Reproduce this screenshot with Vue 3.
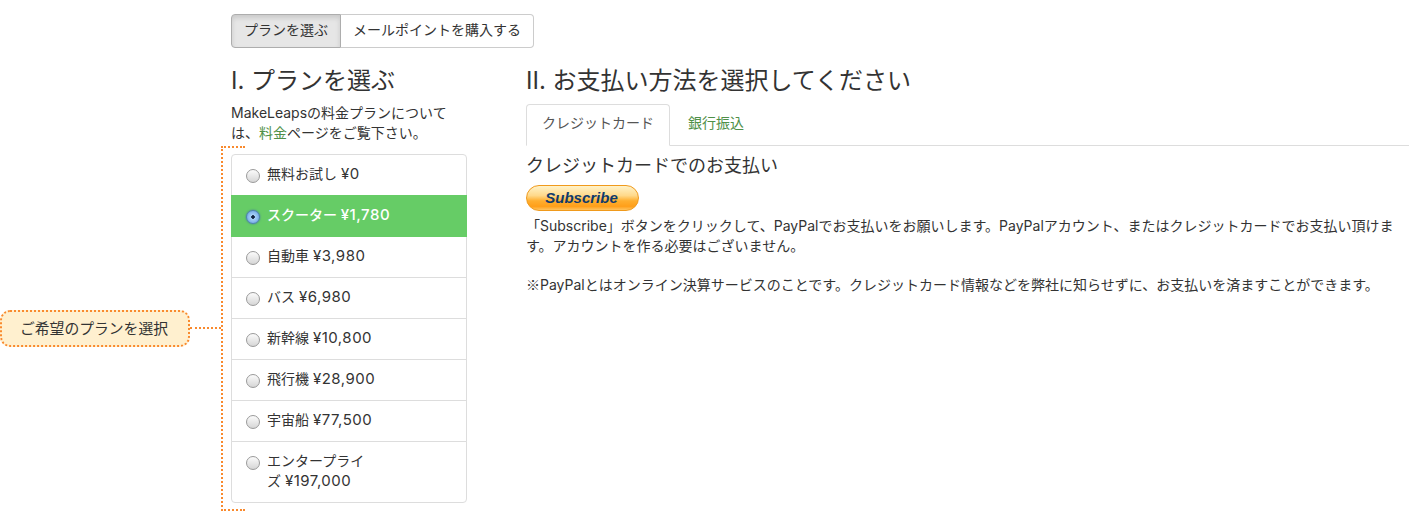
<script setup>
const plans = [
  { name: '無料お試し', price: '¥0' },
  { name: 'スクーター', price: '¥1,780', active: true },
  { name: '自動車', price: '¥3,980' },
  { name: 'バス', price: '¥6,980' },
  { name: '新幹線', price: '¥10,800' },
  { name: '飛行機', price: '¥28,900' },
  { name: '宇宙船', price: '¥77,500' },
  { name: 'エンタープライ\nズ', price: '¥197,000' }
]
</script>

<template>
  <div class="page">
    <div class="btn-group">
      <span class="btn active">プランを選ぶ</span>
      <span class="btn">メールポイントを購入する</span>
    </div>

    <div class="columns">
      <section class="plans">
        <h3>I. プランを選ぶ</h3>
        <p class="intro">MakeLeapsの料金プランについては、<a class="link">料金</a>ページをご覧下さい。</p>
        <div class="plan-list">
          <label
            v-for="plan in plans"
            :key="plan.name"
            class="plan"
            :class="{ selected: plan.active }"
          >
            <span class="radio"></span>
            <span class="plan-name">{{ plan.name }} <span class="price">{{ plan.price }}</span></span>
          </label>

          <!-- annotation overlay -->
          <div class="bracket"></div>
          <div class="connector"></div>
          <div class="callout">ご希望のプランを選択</div>
        </div>
      </section>

      <section class="payment">
        <h3>II. お支払い方法を選択してください</h3>
        <ul class="tabs">
          <li class="tab active">クレジットカード</li>
          <li class="tab"><a class="link">銀行振込</a></li>
        </ul>
        <h4>クレジットカードでのお支払い</h4>
        <div class="subscribe">Subscribe</div>
        <p class="note">「Subscribe」ボタンをクリックして、PayPalでお支払いをお願いします。PayPalアカウント、またはクレジットカードでお支払い頂けます。アカウントを作る必要はございません。</p>
        <p class="note"><span class="mark">※</span>PayPalとはオンライン決算サービスのことです。クレジットカード情報などを弊社に知らせずに、お支払いを済ますことができます。</p>
      </section>
    </div>
  </div>
</template>

<style scoped>
.page {
  box-sizing: border-box;
  width: 1409px;
  padding: 14px 0 16px 231px;
  font-family: Inter, "Noto Sans CJK JP", sans-serif;
  font-size: 14px;
  line-height: 20px;
  color: #333;
}

.btn-group {
  display: flex;
}

.btn {
  box-sizing: border-box;
  height: 34px;
  padding: 5px 12px;
  border: 1px solid #ccc;
  border-left-width: 0;
  border-radius: 0 4px 4px 0;
  background: #fff;
}

.btn.active {
  border-left-width: 1px;
  border-color: #adadad;
  border-radius: 4px 0 0 4px;
  background: #e6e6e6;
  box-shadow: inset 0 3px 5px rgba(0, 0, 0, 0.125);
}

.columns {
  display: flex;
  gap: 59px;
  margin-top: 20px;
}

h3 {
  margin: 0;
  font-size: 24px;
  font-weight: 400;
  line-height: 26px;
}

.plans {
  flex: 0 0 236px;
}

.intro {
  width: 225px;
  margin: 9px 0 11px;
}

.link {
  color: #4f9048;
}

.plan-list {
  position: relative;
  display: flex;
  flex-direction: column;
}

.plan {
  display: flex;
  align-items: flex-start;
  gap: 7px;
  margin-bottom: -1px;
  padding: 9px 15px 11px 14px;
  border: 1px solid #ddd;
  background: #fff;
}

.plan:first-child {
  border-radius: 4px 4px 0 0;
}

.plan:nth-child(8) {
  margin-bottom: 0;
  border-radius: 0 0 4px 4px;
}

.plan.selected {
  position: relative;
  border-color: #66cc66;
  background: #66cc66;
  color: #fff;
  font-weight: 500;
}

.plan-name {
  white-space: pre-line;
}

.price {
  font-size: 15px;
  letter-spacing: 0.5px;
}

.radio {
  box-sizing: border-box;
  flex: none;
  width: 14px;
  height: 14px;
  margin-top: 5px;
  border: 1px solid #9a9a9a;
  border-radius: 50%;
  background: linear-gradient(#fbfbfb, #d6d6d6);
}

.selected .radio {
  border-color: #4f7fb5;
  background: radial-gradient(circle, #10233f 0 1.5px, #a9d2f7 2px, #6fa8e3 7px);
  box-shadow: 0 0 2px #3d6ea8;
}

.bracket {
  position: absolute;
  top: -8px;
  bottom: -8px;
  left: -10px;
  width: 24px;
  border: 2px dotted #f98a2e;
  border-right: 0;
  box-sizing: border-box;
}

.connector {
  position: absolute;
  top: 173px;
  left: -41px;
  width: 31px;
  border-top: 2px dotted #f98a2e;
}

.callout {
  position: absolute;
  top: 156px;
  left: -231px;
  box-sizing: border-box;
  width: 190px;
  height: 37px;
  padding-right: 2px;
  border: 2px dotted #f98a2e;
  border-radius: 10px;
  background: #fff0cf;
  font-size: 14.8px;
  line-height: 35px;
  text-align: center;
}

.payment {
  flex: 1;
  min-width: 0;
}

.tabs {
  display: flex;
  margin: 10px 0 0;
  padding: 0;
  border-bottom: 1px solid #ddd;
  list-style: none;
}

.tab {
  height: 20px;
  margin: 0 2px -1px 0;
  padding: 8px 15px 12px;
  border: 1px solid transparent;
  border-radius: 4px 4px 0 0;
}

.tab.active {
  border-color: #ddd;
  border-bottom-color: #fff;
  background: #fff;
  color: #555;
}

h4 {
  margin: 10px 0 9px;
  font-size: 18px;
  font-weight: 400;
  line-height: 20px;
}

.subscribe {
  box-sizing: border-box;
  width: 113px;
  height: 26px;
  margin-bottom: 5px;
  padding-right: 2px;
  border: 1px solid #f09a1c;
  border-radius: 13px;
  background: linear-gradient(#fff2c8 0, #ffd98a 40%, #ffae2e 62%, #ff9f1a 85%, #ffc35e 100%);
  color: #0f3a6b;
  font-family: "Liberation Sans", sans-serif;
  font-size: 15px;
  font-style: italic;
  font-weight: 700;
  line-height: 24px;
  text-align: center;
}

.note {
  margin: 0 0 19px;
}

.mark {
  font-family: "Noto Sans CJK JP", sans-serif;
  line-height: 1;
}
</style>

<style>
html,
body {
  margin: 0;
  background: #fff;
}
</style>
